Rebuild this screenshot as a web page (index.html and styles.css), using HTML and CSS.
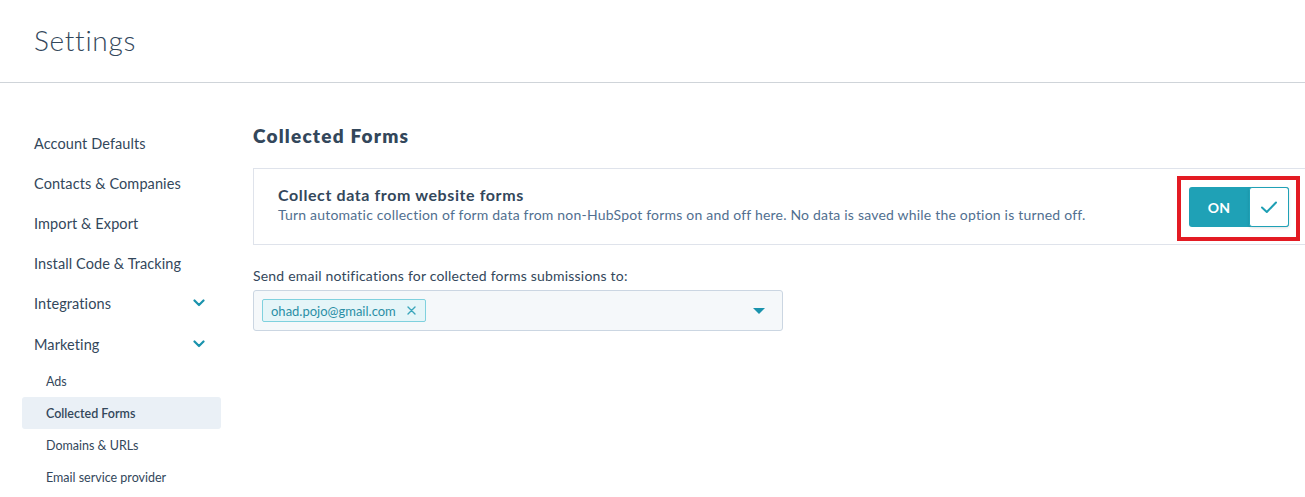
FILE: index.html
```html
<!DOCTYPE html>
<html lang="en">
<head>
<meta charset="utf-8">
<title>Settings</title>
<link rel="stylesheet" href="styles.css">
</head>
<body>
<header class="page-header">
  <h1 class="page-title">Settings</h1>
</header>
<div class="layout">
  <nav class="sidebar">
    <a class="nav-item">Account Defaults</a>
    <a class="nav-item">Contacts &amp; Companies</a>
    <a class="nav-item">Import &amp; Export</a>
    <a class="nav-item">Install Code &amp; Tracking</a>
    <a class="nav-item has-children">Integrations
      <svg class="chev" width="12" height="8" viewBox="0 0 12 8"><path d="M1.5 1.5 L6 6 L10.5 1.5" fill="none" stroke="#1a93ad" stroke-width="2.2" stroke-linecap="round" stroke-linejoin="round"/></svg>
    </a>
    <a class="nav-item has-children">Marketing
      <svg class="chev" width="12" height="8" viewBox="0 0 12 8"><path d="M1.5 1.5 L6 6 L10.5 1.5" fill="none" stroke="#1a93ad" stroke-width="2.2" stroke-linecap="round" stroke-linejoin="round"/></svg>
    </a>
    <a class="sub-item">Ads</a>
    <a class="sub-item active">Collected Forms</a>
    <a class="sub-item">Domains &amp; URLs</a>
    <a class="sub-item">Email service provider</a>
  </nav>
  <main class="main">
    <h2 class="section-title">Collected Forms</h2>
    <div class="card">
      <div class="card-text">
        <div class="card-title">Collect data from website forms</div>
        <div class="card-desc">Turn automatic collection of form data from non-HubSpot forms on and off here. No data is saved while the option is turned off.</div>
      </div>
      <div class="toggle">
        <span class="toggle-label">ON</span>
        <span class="toggle-knob">
          <svg width="18" height="14" viewBox="0 0 18 14"><path d="M2 7.5 L6.8 12 L16 2.5" fill="none" stroke="#1e9fb4" stroke-width="2" stroke-linecap="round" stroke-linejoin="round"/></svg>
        </span>
      </div>
    </div>
    <label class="field-label">Send email notifications for collected forms submissions to:</label>
    <div class="select">
      <span class="tag">ohad.pojo@gmail.com
        <svg class="tag-x" width="9" height="9" viewBox="0 0 9 9"><path d="M1 1 L8 8 M8 1 L1 8" stroke="#3aa6bb" stroke-width="1.4" stroke-linecap="round"/></svg>
      </span>
      <span class="caret"></span>
    </div>
  </main>
</div>
</body>
</html>
```
FILE: styles.css
```css
* { box-sizing: border-box; }
html, body { margin: 0; padding: 0; }
body {
  font-family: Lato, "Open Sans", sans-serif;
  color: #33475b;
  background: #fff;
  overflow: hidden;
  width: 1305px;
  height: 497px;
}
.page-header {
  height: 83px;
  border-bottom: 1px solid #cfd4d9;
  display: flex;
  align-items: center;
  padding-left: 34px;
}
.page-title {
  margin: 0;
  font-size: 28px;
  font-weight: 300;
  letter-spacing: 0.7px;
  color: #33475b;
  padding-bottom: 2px;
}
.layout {
  display: flex;
  gap: 32px;
}
.sidebar {
  width: 221px;
  padding: 40px 0 0 22px;
  display: flex;
  flex-direction: column;
  flex-shrink: 0;
}
.nav-item {
  height: 40px;
  display: flex;
  align-items: center;
  justify-content: space-between;
  padding: 0 16px 0 12px;
  font-size: 14.5px;
  color: #33475b;
  letter-spacing: 0.1px;
}
.nav-item.has-children { height: 41px; }
.chev { margin-top: -1px; }
.sub-item {
  height: 32px;
  display: flex;
  align-items: center;
  padding: 1px 0 0 24px;
  font-size: 12.5px;
  color: #33475b;
  border-radius: 3px;
}
.sub-item.active {
  background: #eaf0f6;
  font-weight: 600;
}
.main {
  padding-top: 40px;
  flex-shrink: 0;
}
.section-title {
  margin: 0 0 19px;
  font-size: 19px;
  line-height: 26px;
  font-weight: 800;
  letter-spacing: 1.2px;
  color: #33475b;
}
.card {
  width: 1060px;
  border: 1px solid #dfe3eb;
  padding: 16px 24px 19px;
  display: flex;
  align-items: flex-start;
  justify-content: space-between;
}
.card-title {
  font-size: 16px;
  line-height: 20px;
  font-weight: 700;
  letter-spacing: 0.6px;
}
.card-desc {
  font-size: 14px;
  line-height: 20px;
  letter-spacing: 0.2px;
  color: #516f90;
}
.toggle {
  position: relative;
  display: flex;
  width: 100px;
  height: 40px;
  margin: 2px -1px -2px 0;
  background: #1fa1b6;
  border-radius: 3px;
}
.toggle::after {
  content: "";
  position: absolute;
  top: -11px;
  right: -11px;
  bottom: -14px;
  left: -12px;
  border: 4px solid #e31b23;
  pointer-events: none;
}
.toggle-label {
  width: 60px;
  display: flex;
  align-items: center;
  justify-content: center;
  color: #fff;
  font-weight: 700;
  font-size: 14px;
  letter-spacing: 0.3px;
}
.toggle-knob {
  width: 40px;
  height: 40px;
  background: #fff;
  border: 1px solid #1fa1b6;
  border-radius: 3px;
  display: flex;
  align-items: center;
  justify-content: center;
  box-shadow: 0 1px 3px rgba(0,0,0,0.12);
}
.field-label {
  display: block;
  margin-top: 22px;
  font-size: 14px;
  line-height: 18px;
  letter-spacing: 0.2px;
  color: #33475b;
}
.select {
  margin-top: 5px;
  width: 530px;
  height: 41px;
  background: #f5f8fa;
  border: 1px solid #cbd6e2;
  border-radius: 3px;
  display: flex;
  align-items: center;
  justify-content: space-between;
  padding: 0 17px 0 8px;
}
.tag {
  height: 23px;
  display: flex;
  align-items: center;
  gap: 11px;
  padding: 0 9px 0 8px;
  background: #e5f5f8;
  border: 1px solid #7fd1de;
  border-radius: 2px;
  font-size: 13px;
  color: #2a8fa6;
}
.caret {
  width: 0;
  height: 0;
  border-left: 6px solid transparent;
  border-right: 6px solid transparent;
  border-top: 6px solid #1a93ad;
}
```
